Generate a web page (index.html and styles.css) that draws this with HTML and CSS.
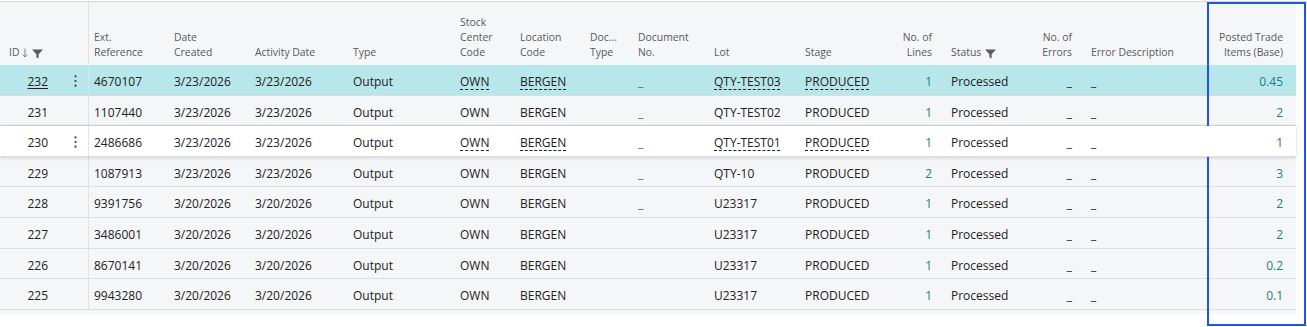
FILE: index.html
```html
<!DOCTYPE html>
<html lang="en">
<head>
<meta charset="utf-8">
<title>Trade Item Journal</title>
<link rel="stylesheet" href="styles.css">
</head>
<body>
<div class="page">
  <div class="list">
    <div class="row head">
      <div class="c hid"><span class="hl">ID<svg class="arrow" width="6" height="10" viewBox="0 0 6 10"><path d="M3 0.5v8.5M0.8 6.6L3 9l2.2-2.4" fill="none" stroke="#808080" stroke-width="1"/></svg><svg class="funnel" width="11" height="10" viewBox="0 0 11 10"><path d="M0 0.5h11L6.6 5.2v4.3L4.4 8.3V5.2z" fill="#5a5a5a"/></svg></span></div>
      <div class="c"></div>
      <div class="c sep">Ext.<br>Reference</div>
      <div class="c">Date<br>Created</div>
      <div class="c">Activity Date</div>
      <div class="c">Type</div>
      <div class="c">Stock<br>Center<br>Code</div>
      <div class="c">Location<br>Code</div>
      <div class="c">Doc...<br>Type</div>
      <div class="c">Document<br>No.</div>
      <div class="c">Lot</div>
      <div class="c">Stage</div>
      <div class="c r">No. of<br>Lines</div>
      <div class="c"><span class="hl">Status<svg class="funnel" width="11" height="10" viewBox="0 0 11 10"><path d="M0 0.5h11L6.6 5.2v4.3L4.4 8.3V5.2z" fill="#5a5a5a"/></svg></span></div>
      <div class="c r">No. of<br>Errors</div>
      <div class="c">Error Description</div>
      <div class="c r">Posted Trade<br>Items (Base)</div>
    </div>

    <div class="row data sel">
      <div class="c r idc"><span class="ul">232</span></div>
      <div class="c menu"><svg width="3" height="12" viewBox="0 0 3 12"><circle cx="1.5" cy="1.3" r="1.1"/><circle cx="1.5" cy="6" r="1.1"/><circle cx="1.5" cy="10.7" r="1.1"/></svg></div>
      <div class="c sep">4670107</div>
      <div class="c">3/23/2026</div>
      <div class="c">3/23/2026</div>
      <div class="c">Output</div>
      <div class="c"><span class="dl">OWN</span></div>
      <div class="c"><span class="dl">BERGEN</span></div>
      <div class="c"></div>
      <div class="c lk">_</div>
      <div class="c"><span class="dl">QTY-TEST03</span></div>
      <div class="c"><span class="dl">PRODUCED</span></div>
      <div class="c r lk">1</div>
      <div class="c">Processed</div>
      <div class="c r">_</div>
      <div class="c">_</div>
      <div class="c r lk">0.45</div>
    </div>

    <div class="row data">
      <div class="c r idc">231</div>
      <div class="c menu"></div>
      <div class="c sep">1107440</div>
      <div class="c">3/23/2026</div>
      <div class="c">3/23/2026</div>
      <div class="c">Output</div>
      <div class="c">OWN</div>
      <div class="c">BERGEN</div>
      <div class="c"></div>
      <div class="c lk">_</div>
      <div class="c">QTY-TEST02</div>
      <div class="c">PRODUCED</div>
      <div class="c r lk">1</div>
      <div class="c">Processed</div>
      <div class="c r">_</div>
      <div class="c">_</div>
      <div class="c r lk">2</div>
    </div>

    <div class="row data cur">
      <div class="c r idc">230</div>
      <div class="c menu"><svg width="3" height="12" viewBox="0 0 3 12"><circle cx="1.5" cy="1.3" r="1.1"/><circle cx="1.5" cy="6" r="1.1"/><circle cx="1.5" cy="10.7" r="1.1"/></svg></div>
      <div class="c sep">2486686</div>
      <div class="c">3/23/2026</div>
      <div class="c">3/23/2026</div>
      <div class="c">Output</div>
      <div class="c"><span class="dl">OWN</span></div>
      <div class="c"><span class="dl">BERGEN</span></div>
      <div class="c"></div>
      <div class="c lk">_</div>
      <div class="c"><span class="dl">QTY-TEST01</span></div>
      <div class="c"><span class="dl">PRODUCED</span></div>
      <div class="c r lk">1</div>
      <div class="c">Processed</div>
      <div class="c r">_</div>
      <div class="c">_</div>
      <div class="c r mute">1</div>
    </div>

    <div class="row data">
      <div class="c r idc">229</div>
      <div class="c menu"></div>
      <div class="c sep">1087913</div>
      <div class="c">3/23/2026</div>
      <div class="c">3/23/2026</div>
      <div class="c">Output</div>
      <div class="c">OWN</div>
      <div class="c">BERGEN</div>
      <div class="c"></div>
      <div class="c lk">_</div>
      <div class="c">QTY-10</div>
      <div class="c">PRODUCED</div>
      <div class="c r lk">2</div>
      <div class="c">Processed</div>
      <div class="c r">_</div>
      <div class="c">_</div>
      <div class="c r lk">3</div>
    </div>

    <div class="row data">
      <div class="c r idc">228</div>
      <div class="c menu"></div>
      <div class="c sep">9391756</div>
      <div class="c">3/20/2026</div>
      <div class="c">3/20/2026</div>
      <div class="c">Output</div>
      <div class="c">OWN</div>
      <div class="c">BERGEN</div>
      <div class="c"></div>
      <div class="c lk">_</div>
      <div class="c">U23317</div>
      <div class="c">PRODUCED</div>
      <div class="c r lk">1</div>
      <div class="c">Processed</div>
      <div class="c r">_</div>
      <div class="c">_</div>
      <div class="c r lk">2</div>
    </div>

    <div class="row data">
      <div class="c r idc">227</div>
      <div class="c menu"></div>
      <div class="c sep">3486001</div>
      <div class="c">3/20/2026</div>
      <div class="c">3/20/2026</div>
      <div class="c">Output</div>
      <div class="c">OWN</div>
      <div class="c">BERGEN</div>
      <div class="c"></div>
      <div class="c lk"></div>
      <div class="c">U23317</div>
      <div class="c">PRODUCED</div>
      <div class="c r lk">1</div>
      <div class="c">Processed</div>
      <div class="c r">_</div>
      <div class="c">_</div>
      <div class="c r lk">2</div>
    </div>

    <div class="row data">
      <div class="c r idc">226</div>
      <div class="c menu"></div>
      <div class="c sep">8670141</div>
      <div class="c">3/20/2026</div>
      <div class="c">3/20/2026</div>
      <div class="c">Output</div>
      <div class="c">OWN</div>
      <div class="c">BERGEN</div>
      <div class="c"></div>
      <div class="c lk"></div>
      <div class="c">U23317</div>
      <div class="c">PRODUCED</div>
      <div class="c r lk">1</div>
      <div class="c">Processed</div>
      <div class="c r">_</div>
      <div class="c">_</div>
      <div class="c r lk">0.2</div>
    </div>

    <div class="row data">
      <div class="c r idc">225</div>
      <div class="c menu"></div>
      <div class="c sep">9943280</div>
      <div class="c">3/20/2026</div>
      <div class="c">3/20/2026</div>
      <div class="c">Output</div>
      <div class="c">OWN</div>
      <div class="c">BERGEN</div>
      <div class="c"></div>
      <div class="c lk"></div>
      <div class="c">U23317</div>
      <div class="c">PRODUCED</div>
      <div class="c r lk">1</div>
      <div class="c">Processed</div>
      <div class="c r">_</div>
      <div class="c">_</div>
      <div class="c r lk">0.1</div>
    </div>
  </div>
  <div class="highlight"></div>
</div>
</body>
</html>
```

FILE: styles.css
```css
* { box-sizing: border-box; }
html, body { margin: 0; padding: 0; background: #ffffff; }
body {
  font-family: "Open Sans", "Noto Sans", sans-serif;
  color: #212121;
  width: 1307px;
  height: 327px;
  overflow: hidden;
}
.page {
  position: relative;
  margin-top: 1px;
  border-top: 1px solid #d6d6d6;
}
.list {
  width: 1296px;
  background: #f5f6f8;
  padding-bottom: 4px;
}
.row {
  display: grid;
  grid-template-columns: 62px 26px 80px 81px 98px 107px 60px 70px 48px 76px 91px 82px 64px 85px 55px 115px 96px;
}
.c {
  padding: 0 6px;
  white-space: nowrap;
  overflow: hidden;
}
.c.r { text-align: right; padding-right: 13px; padding-left: 2px; }
.c.sep { border-left: 1px solid #e1e2e4; padding-left: 5px; }

.head {
  height: 63px;
  font-size: 10.4px;
  line-height: 15px;
  color: #555a5e;
}
.head .c {
  display: flex;
  flex-direction: column;
  justify-content: flex-end;
  padding-bottom: 5px;
}
.head .c.r { align-items: flex-end; }
.head .hid { padding-left: 9px; }
.hl { display: inline-flex; align-items: center; }
.arrow { margin-left: 3px; margin-top: 1px; }
.funnel { margin-left: 4px; margin-top: 2px; }

.data {
  height: 30.6px;
  font-size: 12px;
  border-bottom: 1px solid #dcdddf;
  align-items: stretch;
}
.data .c { line-height: 16px; padding-top: 9px; }
.data .c.idc { padding-right: 14px; }
.data .c.menu { display: flex; justify-content: center; align-items: center; padding: 2px 0 0 0; }
.menu svg { fill: #3a3a3a; margin-left: 1px; }

.sel { background: #b8e7eb; }
.cur {
  background: #ffffff;
  position: relative;
  z-index: 1;
  box-shadow: 0 1px 4px rgba(0, 0, 0, 0.14), 0 -1px 2px rgba(0, 0, 0, 0.06);
}
.ul { text-decoration: underline; text-underline-offset: 2px; }
.dl {
  text-decoration: underline dashed;
  text-decoration-thickness: 1px;
  text-underline-offset: 3px;
}
.lk { color: #1a7d86; }
.mute { color: #5d6365; }

.highlight {
  position: absolute;
  left: 1207px;
  top: 0px;
  width: 99px;
  height: 324px;
  border: 2px solid #1c56e2;
}
```
